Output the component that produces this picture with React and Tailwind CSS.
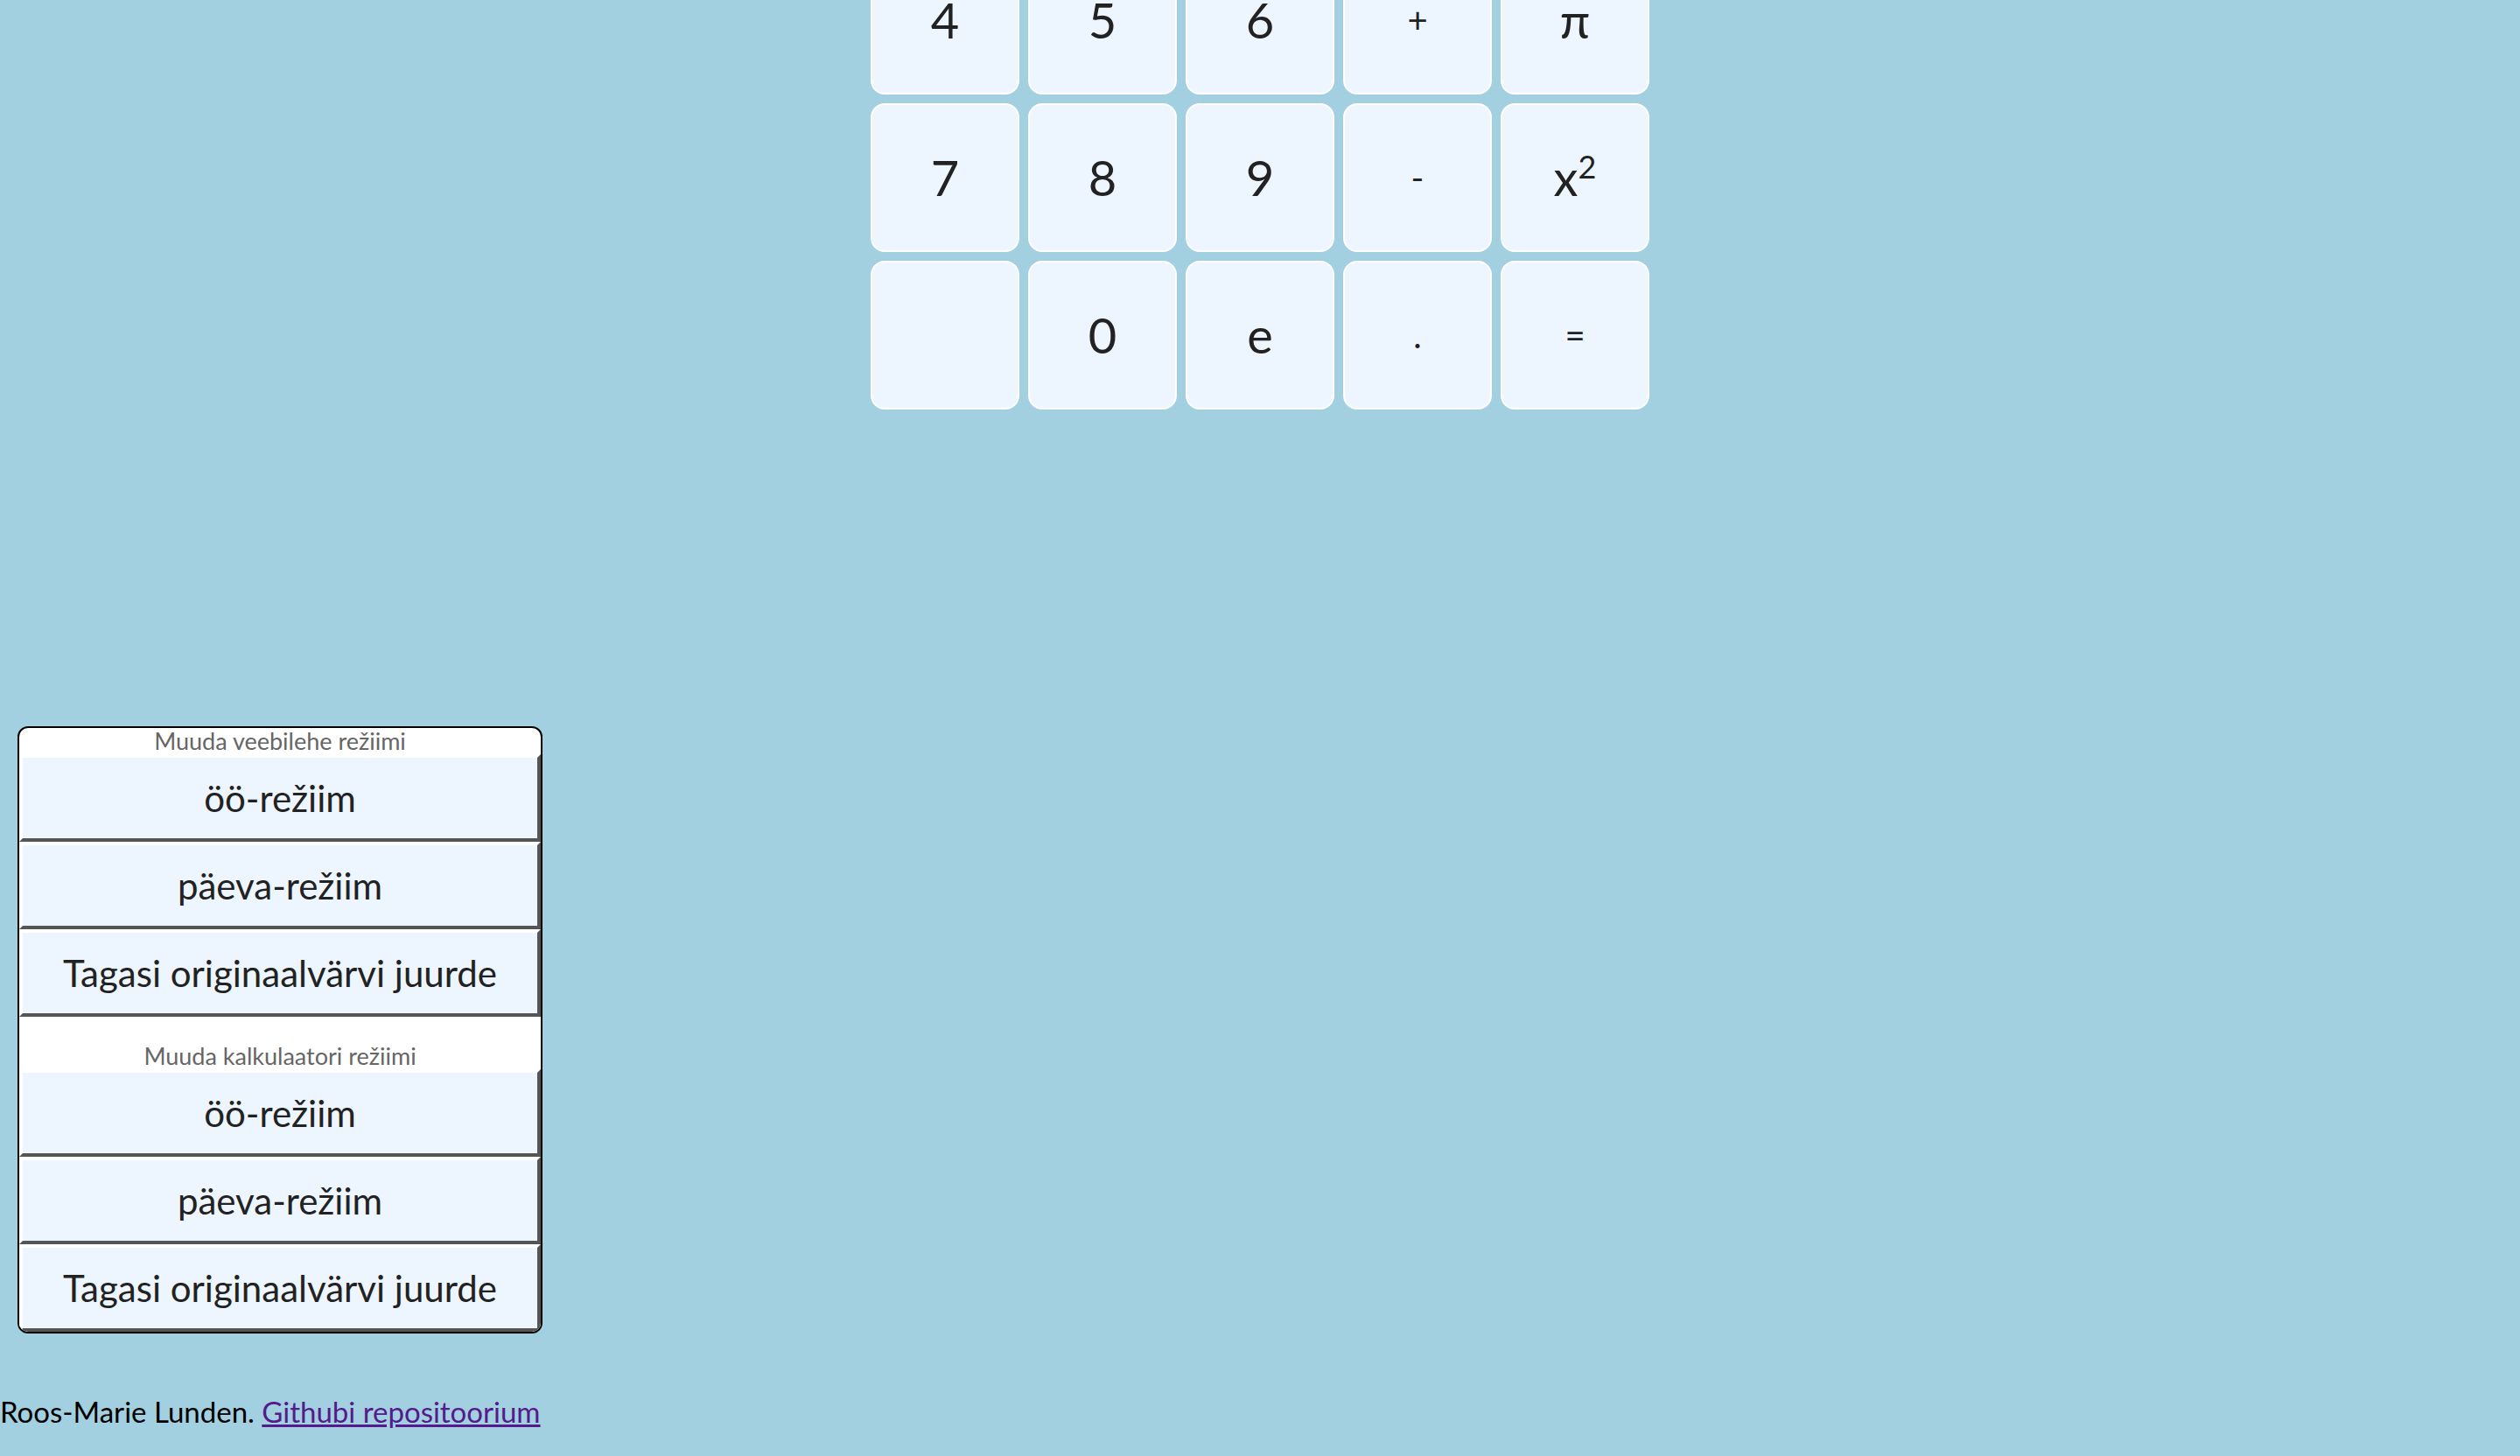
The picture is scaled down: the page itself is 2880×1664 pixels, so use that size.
import React from 'react';

const rows = [
  ['4', '5', '6', '+', 'π'],
  ['7', '8', '9', '-', 'x²'],
  ['', '0', 'e', '.', '='],
];

const small = ['+', '-', '.', '='];

const CalcKey = ({ label }) => (
  <button className="h-[170px] w-[170px] rounded-[16px] border-2 border-white bg-[#edf5fe] text-[#222]">
    {label === 'x²' ? (
      <span className="text-[56px] leading-none">
        x<span className="relative -top-[20px] text-[36px]">2</span>
      </span>
    ) : (
      <span className={small.includes(label) ? 'text-[40px] leading-none' : 'text-[56px] leading-none'}>{label}</span>
    )}
  </button>
);

const ModeButton = ({ children }) => (
  <button className="block h-[100px] w-full border-4 border-t-white border-l-white border-r-[#555] border-b-[#555] bg-[#edf5fe] text-[42px] text-[#222]">
    {children}
  </button>
);

const ModeGroup = ({ title, className }) => (
  <div className={className}>
    <p className="h-[30px] text-center text-[27px] leading-[30px] text-[#666]">{title}</p>
    <ModeButton>öö-režiim</ModeButton>
    <ModeButton>päeva-režiim</ModeButton>
    <ModeButton>Tagasi originaalvärvi juurde</ModeButton>
  </div>
);

export default function App() {
  return (
    <div className="min-h-screen overflow-hidden bg-[#a2d0e1] font-['Lato','Noto_Sans',sans-serif] text-black">
      {/* calculator keys (page is scrolled, top row cut) */}
      <div className="mx-auto -mt-[62px] grid w-[890px] grid-cols-5 gap-[10px]">
        {rows.flat().map((k, i) => (
          <CalcKey key={i} label={k} />
        ))}
      </div>

      {/* mode switcher */}
      <div className="ml-[20px] mt-[362px] w-[600px] overflow-hidden rounded-[12px] border-2 border-black bg-white">
        <ModeGroup title="Muuda veebilehe režiimi" />
        <ModeGroup title="Muuda kalkulaatori režiimi" className="mt-[30px]" />
      </div>

      <footer className="mt-[69px] text-[33px] leading-[40px]">
        Roos-Marie Lunden.{' '}
        <a href="#" className="text-[#551a8b] underline">
          Githubi repositoorium
        </a>
      </footer>
    </div>
  );
}
